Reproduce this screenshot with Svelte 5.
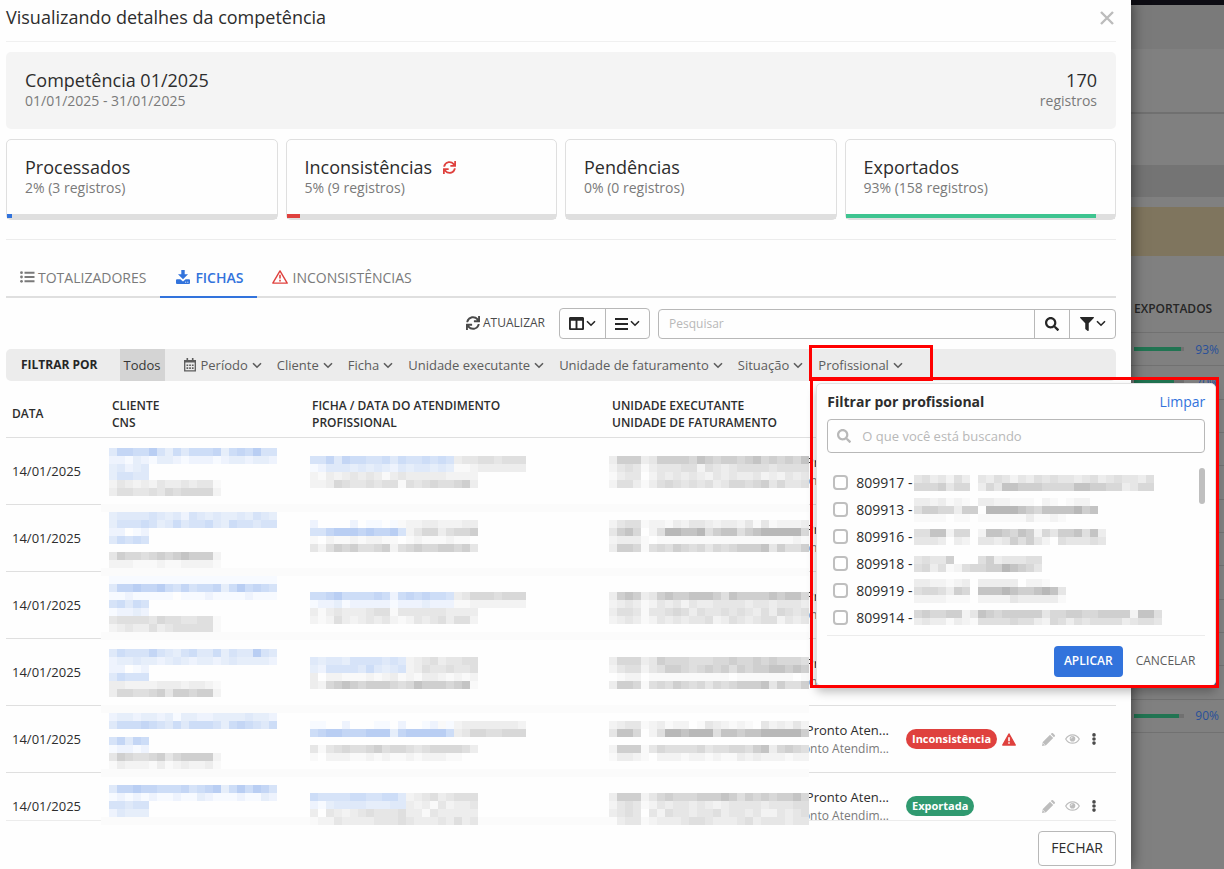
<script>
  const cards = [
    { title: 'Processados', text: '2% (3 registros)', value: 2, color: '#3273dc' },
    { title: 'Inconsistências', text: '5% (9 registros)', value: 5, color: '#df413e', sync: true },
    { title: 'Pendências', text: '0% (0 registros)', value: 0, color: '#999' },
    { title: 'Exportados', text: '93% (158 registros)', value: 93, color: '#3ec490' }
  ];
  const filters = ['Período', 'Cliente', 'Ficha', 'Unidade executante', 'Unidade de faturamento', 'Situação', 'Profissional'];
  const rows = [
    { status: 'Exportada' },
    { status: 'Exportada' },
    { status: 'Exportada' },
    { status: 'Exportada' },
    { status: 'Inconsistência', error: true },
    { status: 'Exportada' }
  ];
  const summary = [93, 80, 100, 100, 100, 100, 100, 100, 100, 100, 100, 90];

  // Shades of the redaction blocks: digits are greys, letters are blues.
  const shades = {
    1: '#f9f9f9', 2: '#f3f3f3', 3: '#ededed', 4: '#e6e6e6', 5: '#dfdfdf', 6: '#d8d8d8', 7: '#cfcfcf', 8: '#c4c4c4', 9: '#b8b8b8',
    a: '#f7faff', b: '#eef3fd', c: '#e6eefa', d: '#dfe9f9', e: '#d6e3f8', f: '#cdddf7', g: '#c4d6f5', h: '#b9cef3'
  };
  const toCells = (lines, x0 = 0, y0 = 0) =>
    lines.flatMap((line, r) =>
      [...line].map((s, c) => ({ x: x0 + c * 8, y: y0 + r * 8, fill: shades[s] })).filter((cell) => cell.fill)
    );

  const people = [
    { id: '809917', mask: ['453425304354243545443453454435', '666746603648877766668877663466'] },
    { id: '809913', mask: ['33231210332211102101220', '57766377099998768888978', '11110110111111311210000'] },
    { id: '809916', mask: ['558826602887687264778583', '444303204434757420544454'] },
    { id: '809918', mask: ['4544700057344455', '5635125667798764'] },
    { id: '809919', mask: ['3322123033333022100', '5665376088898778984', '2222111022224333331'] },
    { id: '809914', mask: ['6766772487677777466776677772885', '3433132155556553265354555534554'] }
  ];
  const peopleMasks = people.map((p) => ({ ...p, w: Math.max(...p.mask.map((m) => m.length)) * 8, h: p.mask.length * 8, cells: toCells(p.mask) }));

  const groups = [
    { y: 10, a: ['dggffhecfdfffgcfgfhee', 'bbacbaccbabbbabccbccb', 'cdbcd', 'ceedd', '24323243343441', '35544546566662'],
      f: ['', 'eegdgffeefdfeefefe344554555', 'abdddcdcdcbdcddcdc112333333', '213234343134333332222', '223654454551545655673'],
      u: ['', '3777347777687677678676768', '2454134445525434555545555', '1344024343432434334232434', '2553135654545346656746445'] },
    { y: 74, a: ['cddddedcdbedcdccdcedc', 'ceeefecdfdeefdcfeedee', 'bb.ab', 'dfefe', '', '47665676787772', '22211121122221'],
      f: ['', 'b....b.aa.a1223322233', 'eeghhhghgghe246635667', '10211212211012111211', '425767556725676677674'],
      u: ['', '2455122132443233241412223', '4786025998895788578999996', '2333101111111111111111121', '3776156576564656777847557'] },
    { y: 138, a: ['aaaaaaaaaaaaaaaaaaaaa', 'dgghgghfegeffgcfhfgfe', 'aabaaaaa.aaabaaaabaaa', 'efdfe', 'abbcb', '45555465544551', '23433534555551'],
      f: ['', '', 'ffghffffgfbfgfgffe346665666', 'abbcabbbbbabbbcbbb112222222', '313433345514444443333', '212532343421243453552'],
      u: ['', '', '3787347877888758777787886', '2343124342433444434434443', '3554144565354454543536545', '2343124343445235434552434'] },
    { y: 211, a: ['dfeeegedcefddfceddhed', 'bccdccbcdcbccbcdccccb', 'bb.ab', 'dfeee', '33222233323321', '36655674776772'],
      f: ['', 'dcddceeeeded234534455', 'cbeeeedfdcde235445445', '302211121231213321212', '326787677765687776781'],
      u: ['', '3666347666555667667676665', '2455245776567675767788787', '0122011111111110111111101', '3776156576564656777847557'] },
    { y: 275, a: ['bccbccbcaccbbccccdccb', 'dfffgfedfdfffecfgfedf', '', 'egdgf', 'abbab', '47655674677772', '13222131232231'],
      f: ['', 'aa..b...aa.b..ab1a233333332', 'fghhggghhhcghhhhhf346655666', '', '414565567566545666653', '1022211212112122211'],
      u: ['', '2344123122014321210423242', '4886025998999588788999997', '', '2777146555564556657836765', '1332102221221211323222122'] },
    { y: 347, a: ['dgghggfffgefghcfhfhge', 'abababaabaacbaaabaacb', 'eedee', 'bdccc'],
      f: ['', 'feeeeffeeffd234534555', 'bacddddcccdd323142334', '304323454445331433333', '122433334445433343534'],
      u: ['', '3777246766677787576767786', '2454124344343234444344455', '3454042544344534434224345', '0344123334554333453444344'] }
  ];
  const maskCells = groups.flatMap((g) => [
    ...toCells(g.a, 8, g.y),
    ...toCells(g.f, 209, g.y),
    ...toCells(g.u, 508, g.y)
  ]);
  const bands = [66, 130, 194, 267, 331, 379];

  let query = $state('');
  let search = $state('');
</script>

{#snippet chevron()}
  <svg class="chev" viewBox="0 0 10 7" aria-hidden="true"><path d="M1 1.2 5 5.2 9 1.2" fill="none" stroke="currentColor" stroke-width="1.6" /></svg>
{/snippet}

{#snippet syncIcon(size)}
  <svg width={size} height={size} viewBox="0 0 512 512" fill="currentColor" aria-hidden="true"><path d="M440.65 12.57l4 82.77A247.16 247.16 0 0 0 255.83 8C134.73 8 33.91 94.92 12.29 209.82A12 12 0 0 0 24.09 224h49.05a12 12 0 0 0 11.67-9.26 175.91 175.91 0 0 1 317-56.94l-101.46-4.86a12 12 0 0 0-12.57 12v47.41a12 12 0 0 0 12 12H500a12 12 0 0 0 12-12V12a12 12 0 0 0-12-12h-47.37a12 12 0 0 0-11.98 12.57zM255.83 432a175.61 175.61 0 0 1-146-77.8l101.8 4.87a12 12 0 0 0 12.57-12v-47.4a12 12 0 0 0-12-12H12a12 12 0 0 0-12 12V500a12 12 0 0 0 12 12h47.35a12 12 0 0 0 12-12.6l-4.15-82.57A247.17 247.17 0 0 0 255.83 504c121.11 0 221.93-86.92 243.55-201.82a12 12 0 0 0-11.8-14.18h-49.05a12 12 0 0 0-11.67 9.26A175.86 175.86 0 0 1 255.83 432z" /></svg>
{/snippet}

{#snippet searchIcon()}
  <svg width="14" height="14" viewBox="0 0 512 512" fill="currentColor" aria-hidden="true"><path d="M505 442.7L405.3 343c-4.5-4.5-10.6-7-17-7H372c27.6-35.3 44-79.7 44-128C416 93.1 322.9 0 208 0S0 93.1 0 208s93.1 208 208 208c48.3 0 92.7-16.4 128-44v16.3c0 6.4 2.5 12.5 7 17l99.7 99.7c9.4 9.4 24.6 9.4 33.9 0l28.3-28.3c9.4-9.4 9.4-24.6.1-34zM208 336c-70.7 0-128-57.2-128-128 0-70.7 57.2-128 128-128 70.7 0 128 57.2 128 128 0 70.7-57.2 128-128 128z" /></svg>
{/snippet}

<div class="screen">
  <section class="dialog" role="dialog" aria-labelledby="dialog-title">
    <header class="head">
      <h1 id="dialog-title">Visualizando detalhes da competência</h1>
      <button class="close" aria-label="Fechar janela">
        <svg width="14" height="14" viewBox="0 0 14 14" aria-hidden="true"><path d="M1 1 13 13M13 1 1 13" stroke="currentColor" stroke-width="2.4" /></svg>
      </button>
    </header>

    <div class="period">
      <div>
        <h2>Competência 01/2025</h2>
        <p>01/01/2025 - 31/01/2025</p>
      </div>
      <div class="total">
        <h2>170</h2>
        <p>registros</p>
      </div>
    </div>

    <div class="cards">
      {#each cards as card}
        <article class="card">
          <h2>{card.title}{#if card.sync}<span class="sync">{@render syncIcon(13)}</span>{/if}</h2>
          <p>{card.text}</p>
          <div class="track"><div class="fill" style="width: {card.value}%; background: {card.color}"></div></div>
        </article>
      {/each}
    </div>

    <nav class="tabs">
      <button class="tab first">
        <svg width="15" height="12" viewBox="0 0 15 12" fill="currentColor" aria-hidden="true"><circle cx="1.5" cy="1.7" r="1.4" /><circle cx="1.5" cy="6" r="1.4" /><circle cx="1.5" cy="10.3" r="1.4" /><path d="M4.5 .8h10v1.9h-10zM4.5 5.1h10v1.9h-10zM4.5 9.3h10v1.9h-10z" /></svg>
        TOTALIZADORES
      </button>
      <button class="tab active">
        <svg width="14" height="14" viewBox="0 0 14 14" fill="currentColor" aria-hidden="true"><path d="M5.3 0h3.4v4.3H12L7 9.3 2 4.3h3.3zM1 9.3h3.4L7 11.5l2.6-2.2H13a1 1 0 0 1 1 1V13a1 1 0 0 1-1 1H1a1 1 0 0 1-1-1v-2.7a1 1 0 0 1 1-1z" /><path d="M9 12.2h1.2M11.2 12.2h1.2" stroke="#fff" stroke-width=".8" /></svg>
        FICHAS
      </button>
      <button class="tab alert">
        <svg width="16" height="14" viewBox="0 0 16 14" fill="none" stroke="currentColor" stroke-width="1.4" stroke-linejoin="round" aria-hidden="true"><path d="M8 .9 15.2 13.1H.8z" /><path d="M8 4.8v3.8M8 9.8v1.6" stroke-width="1.6" /></svg>
        INCONSISTÊNCIAS
      </button>
    </nav>

    <div class="toolbar">
      <button class="refresh">{@render syncIcon(14)}ATUALIZAR</button>
      <div class="group">
        <button aria-label="Colunas">
          <svg width="15" height="15" viewBox="0 0 512 512" fill="currentColor" aria-hidden="true"><path d="M464 32H48C21.49 32 0 53.49 0 80v352c0 26.51 21.49 48 48 48h416c26.51 0 48-21.49 48-48V80c0-26.51-21.49-48-48-48zM224 416H64V160h160v256zm224 0H288V160h160v256z" /></svg>{@render chevron()}
        </button>
        <button aria-label="Densidade">
          <svg width="13" height="12" viewBox="0 0 13 12" fill="currentColor" aria-hidden="true"><path d="M0 0h13v2H0zM0 5h13v2H0zM0 10h13v2H0z" /></svg>{@render chevron()}
        </button>
      </div>
      <div class="group search">
        <input type="text" placeholder="Pesquisar" aria-label="Pesquisar" bind:value={search} />
        <button class="narrow" aria-label="Buscar">{@render searchIcon()}</button>
        <button class="wide" aria-label="Filtros">
          <svg width="14" height="14" viewBox="0 0 512 512" fill="currentColor" aria-hidden="true"><path d="M487.976 0H24.028C2.71 0-8.047 25.866 7.058 40.971L192 225.941V432c0 7.831 3.821 15.17 10.237 19.662l80 55.98C298.02 518.69 320 507.493 320 487.98V225.941l184.947-184.97C520.021 25.896 509.338 0 487.976 0z" /></svg>{@render chevron()}
        </button>
      </div>
    </div>

    <div class="filterbar">
      <strong>FILTRAR POR</strong>
      <button class="all">Todos</button>
      {#each filters as name, i}
        <div class="filter">
          <button>
            {#if i === 0}
              <svg class="cal" width="12" height="14" viewBox="0 0 12 14" aria-hidden="true"><path d="M.7 2.7h10.6v10.2H.7z" fill="none" stroke="currentColor" stroke-width="1.3" /><path d="M0 2.2h12v2.2H0zM2.5 0h1.6v3H2.5zM7.9 0h1.6v3H7.9zM2.5 6.4h1.7v1.6H2.5zM5.2 6.4h1.7v1.6H5.2zM7.9 6.4h1.7v1.6H7.9zM2.5 9.3h1.7v1.6H2.5zM5.2 9.3h1.7v1.6H5.2zM7.9 9.3h1.7v1.6H7.9z" fill="currentColor" /></svg>
            {/if}
            {name}{@render chevron()}
          </button>
          {#if name === 'Profissional'}
            <form class="popup" onsubmit={(e) => e.preventDefault()}>
              <div class="popup-head"><h3>Filtrar por profissional</h3><a href="#limpar">Limpar</a></div>
              <label class="lookup">
                {@render searchIcon()}
                <input type="text" placeholder="O que você está buscando" aria-label="Buscar profissional" bind:value={query} />
              </label>
              <div class="list">
                <ul>
                  {#each peopleMasks as p}
                    <li>
                      <label><input type="checkbox" /><span>{p.id} -</span>
                        <svg width={p.w} height={p.h} shape-rendering="crispEdges" aria-hidden="true">
                          {#each p.cells as c}<rect x={c.x} y={c.y} width="8" height="8" fill={c.fill} />{/each}
                        </svg>
                      </label>
                    </li>
                  {/each}
                </ul>
                <div class="thumb"></div>
              </div>
              <div class="popup-foot">
                <button class="apply">APLICAR</button>
                <button class="cancel" type="button">CANCELAR</button>
              </div>
            </form>
            <div class="mark mark-button"></div>
            <div class="mark mark-popup"></div>
          {/if}
        </div>
      {/each}
    </div>

    <div class="results">
      <div class="scroll">
        <table>
          <colgroup><col class="c-date" /><col class="c-client" /><col class="c-form" /><col class="c-unit" /><col /><col class="c-actions" /></colgroup>
          <thead>
            <tr>
              <th>DATA</th>
              <th>CLIENTE<br />CNS</th>
              <th>FICHA / DATA DO ATENDIMENTO<br />PROFISSIONAL</th>
              <th>UNIDADE EXECUTANTE<br />UNIDADE DE FATURAMENTO</th>
              <th></th>
              <th></th>
            </tr>
          </thead>
          <tbody>
            {#each rows as row}
              <tr>
                <td>14/01/2025</td>
                <td></td>
                <td></td>
                <td class="unit">Pronto Aten...<br /><small>Pronto Atendim...</small></td>
                <td>
                  <div class="status">
                    <span class="badge" class:error={row.error}>{row.status}</span>
                    {#if row.error}
                      <svg width="14" height="13" viewBox="0 0 14 13" aria-hidden="true"><path d="M7 1 13.2 12H.8z" fill="#df413e" stroke="#df413e" stroke-width="1.5" stroke-linejoin="round" /><path d="M7 4.2v4M7 9.2v1.6" stroke="#fff" stroke-width="1.6" /></svg>
                    {/if}
                  </div>
                </td>
                <td>
                  <div class="actions">
                    <button aria-label="Editar"><svg width="13" height="13" viewBox="0 0 13 13" fill="currentColor" aria-hidden="true"><path d="M.8 9 8 1.8l3.2 3.2L4 12.2 0 13zM8.700 1.100 9.600.3a1 1 0 0 1 1.400 0L12.700 2a1 1 0 0 1 0 1.400l-.8.900z" /><path d="M1.200 10.300l1.600 1.600" stroke="#fff" stroke-width=".7" /></svg></button>
                    <button aria-label="Visualizar"><svg width="15" height="10" viewBox="0 0 15 10" fill="none" stroke="currentColor" aria-hidden="true"><path d="M.7 5C3.8-.6 11.2-.6 14.3 5 11.2 10.6 3.8 10.6.7 5z" stroke-width="1.2" /><circle cx="7.5" cy="4.7" r="2.8" fill="currentColor" stroke="none" /><path d="M6 4.6A1.6 1.6 0 0 1 7.5 3.2" stroke="#fff" stroke-width=".8" /></svg></button>
                    <button class="more" aria-label="Mais opções"><svg width="4" height="12" viewBox="0 0 4 12" fill="currentColor" aria-hidden="true"><circle cx="2" cy="1.9" r="1.8" /><circle cx="2" cy="6" r="1.8" /><circle cx="2" cy="10.1" r="1.8" /></svg></button>
                  </div>
                </td>
              </tr>
            {/each}
          </tbody>
        </table>
      </div>
      <svg class="redaction" width="708" height="387" shape-rendering="crispEdges" aria-hidden="true">
        <rect width="708" height="387" fill="#fefefe" />
        {#each bands as y}<rect x="0" {y} width="708" height="8" fill="#fbfbfb" />{/each}
        {#each maskCells as c}<rect x={c.x} y={c.y} width="8" height="8" fill={c.fill} />{/each}
      </svg>
    </div>

    <footer class="foot"><button>FECHAR</button></footer>
  </section>

  <aside class="behind">
    <div class="b-top"></div>
    <div class="b-nav"></div>
    <div class="b-title"></div>
    <div class="b-tabs"></div>
    <div class="b-strip"></div>
    <div class="b-notice"></div>
    <div class="b-label">EXPORTADOS</div>
    <ul class="b-rows">
      {#each summary as value}
        <li><div class="b-bar"><div style="width: {value}%"></div></div><a href="#detalhe">{value === 80 ? 70 : value}%</a></li>
      {/each}
    </ul>
  </aside>
</div>

<style>
  :global(body) { font-family: 'Open Sans', sans-serif; background: #808080; color: #2d2d2d; }
  * { box-sizing: border-box; }
  h1, h2, h3, p, ul { margin: 0; padding: 0; font-weight: 400; }
  ul { list-style: none; }
  button, input { font: inherit; color: inherit; }
  button { background: none; border: 0; padding: 0; cursor: pointer; }
  svg { display: block; flex: none; }
  a { text-decoration: none; color: #3273dc; }
  .screen { display: flex; height: 100vh; }
  .dialog { flex: 1; min-width: 0; display: flex; flex-direction: column; background: #fefefe; padding: 0 15px 3px 6px; position: relative; z-index: 1; box-shadow: 0 0 14px rgba(0, 0, 0, .6); }
  .head { display: flex; align-items: flex-start; justify-content: space-between; height: 42px; padding-top: 5px; border-bottom: 1px solid #f0f0f0; flex: none; }
  h1, h2 { font-size: 18px; line-height: 24px; }
  .close { color: #bcbcbc; padding: 6px 2px; }
  .period { display: flex; justify-content: space-between; background: #f4f4f4; border-radius: 5px; margin-top: 10px; padding: 16px 19px 19px; }
  p { font-size: 14px; line-height: 18px; color: #7a7a7a; }
  .total { text-align: right; }
  .cards { display: grid; grid-template-columns: repeat(4, 1fr); gap: 8px; padding: 10px 0 19px; border-bottom: 1px solid #ececec; }
  .card { border: 1px solid #dfdfdf; border-radius: 5px; padding: 15px 0 0; }
  .card h2, .card p { padding: 0 18px; }
  .card h2 { display: flex; align-items: center; }
  .sync { color: #df413e; margin-left: 11px; }
  .track { height: 5px; margin-top: 17px; background: #dfdfdf; }
  .fill { height: 4px; }
  .tabs { display: flex; margin-top: 20px; border-bottom: 2px solid #dfdfdf; flex: none; }
  .tab { display: flex; align-items: center; gap: 4px; height: 38px; padding: 0 15px 2px; font-size: 14px; color: #7a7a7a; margin-bottom: -2px; border-bottom: 2px solid transparent; }
  .tab.first { padding: 0 14px 2px; gap: 3px; }
  .tab.active { color: #3273dc; border-color: #3273dc; font-weight: 600; gap: 5px; padding: 0 14px 2px 16px; }
  .tab.alert svg { color: #df413e; }
  .toolbar { display: flex; justify-content: flex-end; align-items: center; gap: 8px; margin-top: 10px; height: 31px; flex: none; }
  .refresh { display: flex; align-items: center; gap: 3px; font-size: 12px; color: #4a4a4a; margin-right: 6px; padding-bottom: 2px; }
  .group { display: flex; height: 31px; border: 1px solid #b8b8b8; border-radius: 4px; color: #262626; }
  .group button { display: flex; align-items: center; justify-content: center; gap: 2px; padding: 0 9px; }
  .group button + button, .search button { border-left: 1px solid #b8b8b8; }
  .search { width: 458px; height: 30px; }
  .search input { flex: 1; min-width: 0; border: 0; outline: 0; background: none; padding: 0 10px; font-size: 12px; }
  .search .narrow { width: 35px; padding: 0; }
  .search .wide { width: 46px; padding: 0; }
  input::placeholder { color: #b8b8b8; opacity: 1; }
  .chev { width: 10px; height: 7px; }
  .filterbar { position: relative; z-index: 2; display: flex; align-items: center; gap: 15px; height: 32px; margin-top: 10px; padding-left: 15px; background: #ececec; border-radius: 5px; font-size: 13px; color: #5c5c5c; flex: none; }
  .filterbar strong { font-size: 12px; color: #262626; margin-right: 7px; padding-bottom: 2px; }
  .all { align-self: stretch; padding: 0 4px; margin-right: 4px; background: #d4d4d4; color: #363636; }
  .filter { position: relative; height: 32px; display: flex; align-items: center; white-space: nowrap; }
  .filter > button { display: flex; align-items: center; gap: 4px; }
  .cal { margin-right: 1px; }
  .popup { position: absolute; left: -2px; top: 34px; width: 400px; padding: 8px 10px; height: 303px; background: #fefefe; color: #2d2d2d; border: 1px solid #e2e2e2; border-radius: 5px; box-shadow: 0 6px 10px rgba(0, 0, 0, .25); }
  .popup-head { display: flex; justify-content: space-between; align-items: center; font-size: 14px; line-height: 20px; }
  h3 { font-size: 14px; font-weight: 700; }
  .lookup { display: flex; align-items: center; gap: 11px; height: 34px; margin-top: 7px; padding: 0 9px; border: 1px solid #b8b8b8; border-radius: 4px; color: #b8b8b8; }
  .lookup input { flex: 1; border: 0; outline: 0; padding: 0; background: none; font-size: 13px; color: #2d2d2d; }
  .list { display: flex; justify-content: space-between; height: 183px; padding: 15px 0 10px; border-bottom: 1px solid #ececec; }
  .list ul { overflow: hidden; flex: 1; }
  .list li { height: 27px; }
  .list label { display: flex; align-items: center; height: 29px; padding-left: 6px; font-size: 14px; }
  .list span { width: 58px; }
  .list input { appearance: none; width: 15px; height: 15px; margin: 0 8px 0 0; border: 2px solid #bfbfbf; border-radius: 4px; background: #fff; flex: none; }
  .thumb { width: 6px; height: 36px; border-radius: 3px; background: #bfbfbf; }
  .popup-foot { display: flex; justify-content: flex-end; gap: 13px; padding: 10px 10px 0 0; font-size: 12px; }
  .popup-foot button { height: 31px; padding-bottom: 2px; }
  .popup-foot .apply { padding: 0 10px 2px; border-radius: 4px; background: #3273dc; color: #fff; font-weight: 600; }
  .cancel { color: #5c5c5c; }
  .mark { position: absolute; border: 3px solid #f00; pointer-events: none; }
  .mark-button { left: -9px; top: -4px; width: 124px; height: 36px; }
  .mark-popup { left: -8px; top: 28px; width: 409px; height: 311px; }
  .results { position: relative; flex: 1; min-height: 0; }
  .scroll { height: 100%; overflow: hidden; border-bottom: 1px solid #ececec; }
  table { width: 100%; table-layout: fixed; border-collapse: separate; border-spacing: 0; font-size: 13px; }
  .c-date { width: 100px; }
  .c-client { width: 200px; }
  .c-form { width: 300px; }
  .c-unit { width: 294px; }
  .c-actions { width: 86px; }
  th, td { padding: 0 6px; text-align: left; border-bottom: 1px solid #dfdfdf; }
  th { height: 57px; padding-top: 9px; font-size: 12px; line-height: 17px; font-weight: 600; }
  td { height: 67px; line-height: 18px; }
  td.unit { text-align: right; padding-right: 11px; white-space: nowrap; }
  small { font-size: 12px; color: #7a7a7a; }
  .status { display: flex; align-items: center; gap: 5px; }
  .badge { padding: 0 6px; height: 20px; line-height: 20px; border-radius: 10px; background: #309a70; color: #fff; font-size: 11px; font-weight: 700; }
  .badge.error { background: #df413e; }
  .actions { display: flex; align-items: center; gap: 10px; padding-left: 6px; color: #bdbdbd; }
  .more { color: #4a4a4a; margin-left: 2px; }
  .redaction { position: absolute; left: 95px; top: 57px; }
  .foot { display: flex; justify-content: flex-end; padding-top: 10px; flex: none; }
  .foot button { height: 35px; padding: 0 12px 2px; border: 1px solid #b8b8b8; border-radius: 4px; font-size: 14px; }
  .behind { width: 93px; background: #808080; overflow: hidden; }
  .b-top { height: 5px; background: #0d0c13; }
  .b-nav { height: 44px; background: #7a7a7a; }
  .b-title { height: 65px; border-bottom: 2px solid #707070; }
  .b-tabs { height: 51px; }
  .b-strip { height: 32px; background: #747474; }
  .b-notice { height: 49px; margin-top: 10px; background: #7f755e; }
  .b-label { height: 76px; padding: 44px 0 0 3px; font-size: 12px; line-height: 18px; font-weight: 600; color: #262626; }
  .b-rows { display: grid; grid-template-rows: repeat(12, 1fr); height: 401px; border-top: 1px solid #717171; }
  .b-rows li { display: flex; align-items: center; justify-content: space-between; padding: 0 5px 0 3px; border-bottom: 1px solid #717171; font-size: 12px; }
  .b-rows a { color: #28509a; }
  .b-bar { width: 50px; height: 4px; background: #707070; }
  .b-bar div { height: 100%; background: #217452; }
</style>
